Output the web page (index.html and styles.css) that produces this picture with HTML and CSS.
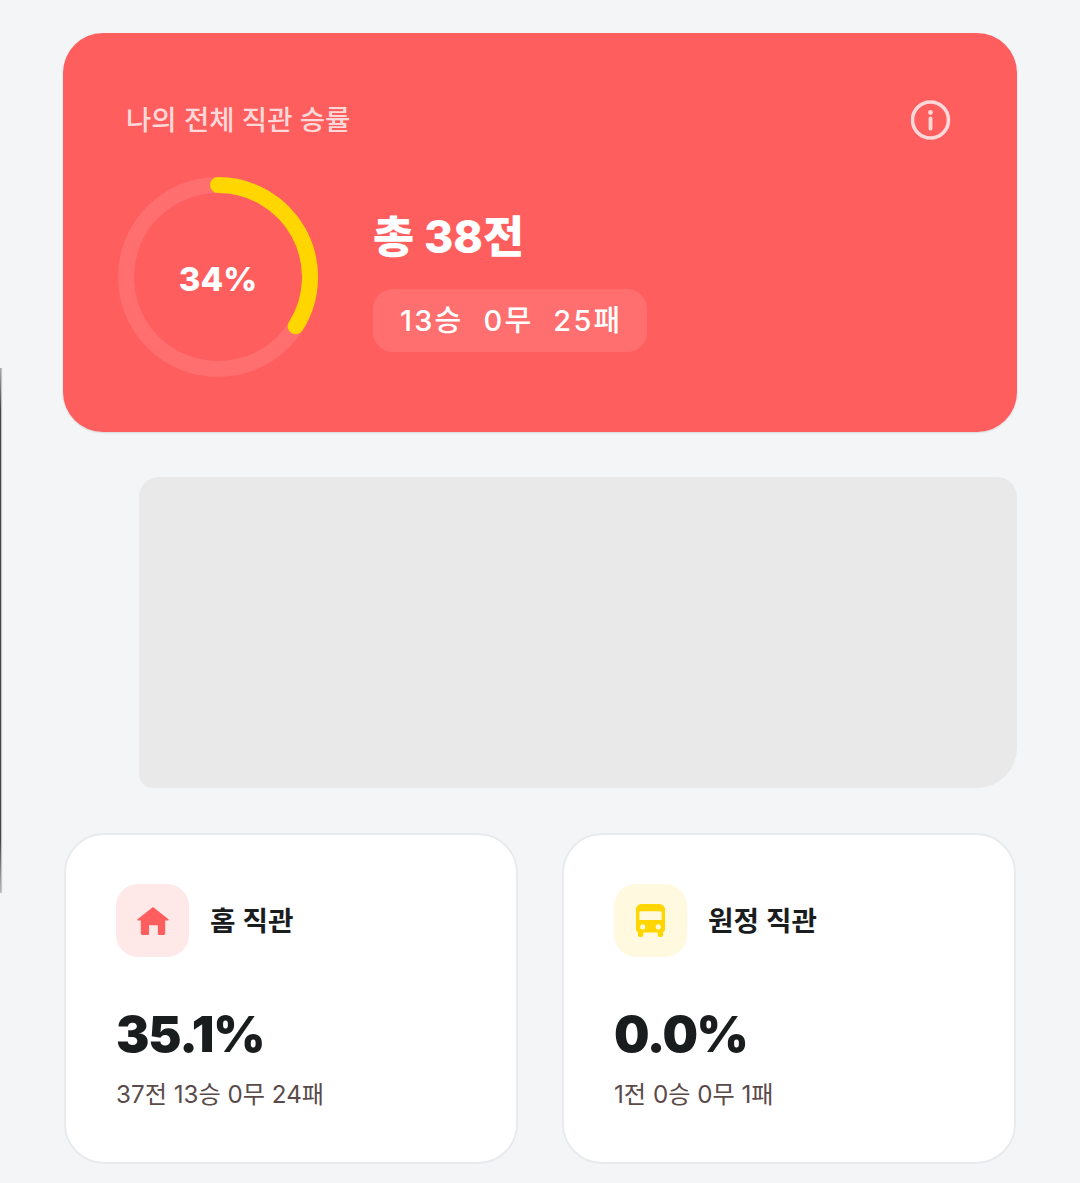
FILE: index.html

```html
<!DOCTYPE html>
<html lang="ko">
<head>
  <meta charset="UTF-8">
  <meta name="viewport" content="width=device-width, initial-scale=1.0">
  <title>직관 승률</title>
  <link rel="stylesheet" href="styles.css">
</head>
<body>
  <div class="edge-line"></div>

  <section class="hero">
    <div class="hero-top">
      <h2 class="hero-title">나의 전체 직관 승률</h2>
      <svg class="info-icon" viewBox="0 0 40 40" fill="none">
        <circle cx="19.500" cy="20" r="18" stroke="#ffd9d9" stroke-width="3.600"/>
        <circle cx="19.500" cy="12.500" r="2.400" fill="#ffd9d9"/>
        <path d="M19.500 18.500v10" stroke="#ffd9d9" stroke-width="3.800" stroke-linecap="round"/>
      </svg>
    </div>
    <div class="hero-body">
      <div class="ring">
        <svg viewBox="0 0 200 200" fill="none">
          <circle cx="100" cy="100" r="92" stroke="#ff6f6f" stroke-width="16"/>
          <path d="M100 8A92 92 0 0 1 177.700 149.300" stroke="#ffd600" stroke-width="16" stroke-linecap="round"/>
        </svg>
        <span class="ring-label">34%</span>
      </div>
      <div class="hero-info">
        <div class="hero-total">총 38전</div>
        <div class="hero-pill">
          <span>13승</span>
          <span>0무</span>
          <span>25패</span>
        </div>
      </div>
    </div>
  </section>

  <div class="placeholder"></div>

  <div class="stats">
    <div class="stat-card">
      <div class="stat-head">
        <div class="stat-icon home">
          <svg viewBox="0 0 36 32" fill="#ff5e5e">
            <path d="M18 1 34.500 14.200c.6.500.3 1.300-.5 1.300h-3V29c0 1.200-.8 2-2 2h-4.500c-.8 0-1.300-.5-1.300-1.300V20.500h-9.400v9.200c0 .8-.5 1.300-1.300 1.300H7c-1.200 0-2-.8-2-2V15.500H2c-.8 0-1.100-.8-.5-1.300z"/>
          </svg>
        </div>
        <span class="stat-label">홈 직관</span>
      </div>
      <div class="stat-value">35.1%</div>
      <div class="stat-sub">37전 13승 0무 24패</div>
    </div>
    <div class="stat-card">
      <div class="stat-head">
        <div class="stat-icon away">
          <svg viewBox="0 0 30 34" fill="#ffd600" fill-rule="evenodd">
            <path d="M7 0h16c4 0 7 2 7 5.500V26c0 1.500-.7 2.500-2 3v3c0 1.200-.8 2-2 2h-1.500c-1.200 0-2-.8-2-2v-2.500h-15V32c0 1.200-.8 2-2 2H4c-1.200 0-2-.8-2-2v-3c-1.300-.5-2-1.500-2-3V5.500C0 2 3 0 7 0zM4.500 7.500c-.6 0-1 .4-1 1v7c0 .6.4 1 1 1h21c.6 0 1-.4 1-1v-7c0-.6-.4-1-1-1zM7 21a2.600 2.600 0 1 0 0 5.200A2.600 2.600 0 0 0 7 21zm16 0a2.600 2.600 0 1 0 0 5.200A2.600 2.600 0 0 0 23 21z"/>
          </svg>
        </div>
        <span class="stat-label">원정 직관</span>
      </div>
      <div class="stat-value">0.0%</div>
      <div class="stat-sub">1전 0승 0무 1패</div>
    </div>
  </div>
</body>
</html>
```

FILE: styles.css

```css
* {
  box-sizing: border-box;
}
body {
  margin: 0;
  padding: 33px 63px 0;
  background-color: #f4f5f7;
  font-family: Inter, "Noto Sans CJK KR", sans-serif;
}
.edge-line {
  position: absolute;
  left: 0;
  top: 368px;
  width: 1px;
  height: 525px;
  background: linear-gradient(to bottom, #aaa, #444 8%, #444 90%, #bbb);
  box-shadow: 1px 0 1px rgba(0,0,0,0.25);
}
.hero {
  height: 399px;
  padding: 67px 66px 0 55px;
  background-color: #ff5e5e;
  border-radius: 40px;
  box-shadow: 0 1px 2px rgba(0,0,0,0.12);
}
.hero-top {
  display: flex;
  justify-content: space-between;
  align-items: center;
  height: 40px;
}
.hero-title {
  margin: -4px 0 0 8px;
  font-size: 27.500px;
  font-weight: 500;
  color: #ffd9d9;
}
.info-icon {
  width: 40px;
  height: 40px;
}
.hero-body {
  display: flex;
  align-items: center;
  gap: 55px;
  margin-top: 37px;
}
.ring {
  display: flex;
  align-items: center;
  justify-content: center;
  position: relative;
  width: 200px;
  height: 200px;
}
.ring svg {
  position: absolute;
  inset: 0;
}
.ring-label {
  margin-top: 3px;
  font-size: 33px;
  font-weight: 800;
  color: white;
}
.hero-info {
  padding-top: 7px;
}
.hero-total {
  font-size: 44.700px;
  line-height: 54px;
  font-weight: 800;
  color: white;
}
.hero-pill {
  display: inline-flex;
  gap: 20px;
  margin-top: 25px;
  padding: 0 25px 4px 27px;
  height: 63px;
  align-items: center;
  background-color: #ff6f6f;
  border-radius: 20px;
  font-size: 29px;
  font-weight: 500;
  letter-spacing: 2.200px;
  color: #fff;
}
.placeholder {
  height: 311px;
  margin: 45px 0 45px 76px;
  background-color: #e9e9e9;
  border-radius: 20px 20px 40px 14px;
}
.stats {
  display: grid;
  grid-template-columns: 1fr 1fr;
  gap: 44px;
  margin: 0 1px;
}
.stat-card {
  height: 331px;
  padding: 49px 50px 0;
  background-color: white;
  border: 2px solid #e8eaed;
  border-radius: 40px;
}
.stat-head {
  display: flex;
  align-items: center;
  gap: 21px;
}
.stat-icon {
  display: flex;
  align-items: center;
  justify-content: center;
  width: 73px;
  height: 73px;
  border-radius: 22px;
}
.stat-icon.home {
  background-color: #ffe8e8;
}
.stat-icon.home svg {
  width: 34px;
  height: 30px;
}
.stat-icon.away {
  background-color: #fff9e0;
}
.stat-icon.away svg {
  width: 29px;
  height: 33px;
}
.stat-label {
  margin-top: -4px;
  font-size: 27.700px;
  font-weight: 600;
  color: #1a1d1e;
}
.stat-value {
  margin-top: 42px;
  font-size: 50px;
  line-height: 70px;
  font-weight: 900;
  letter-spacing: -1.300px;
  color: #1a1d1e;
}
.stat-sub {
  margin-top: 8px;
  font-size: 24.200px;
  line-height: 36px;
  color: #5a4a4a;
}
```
